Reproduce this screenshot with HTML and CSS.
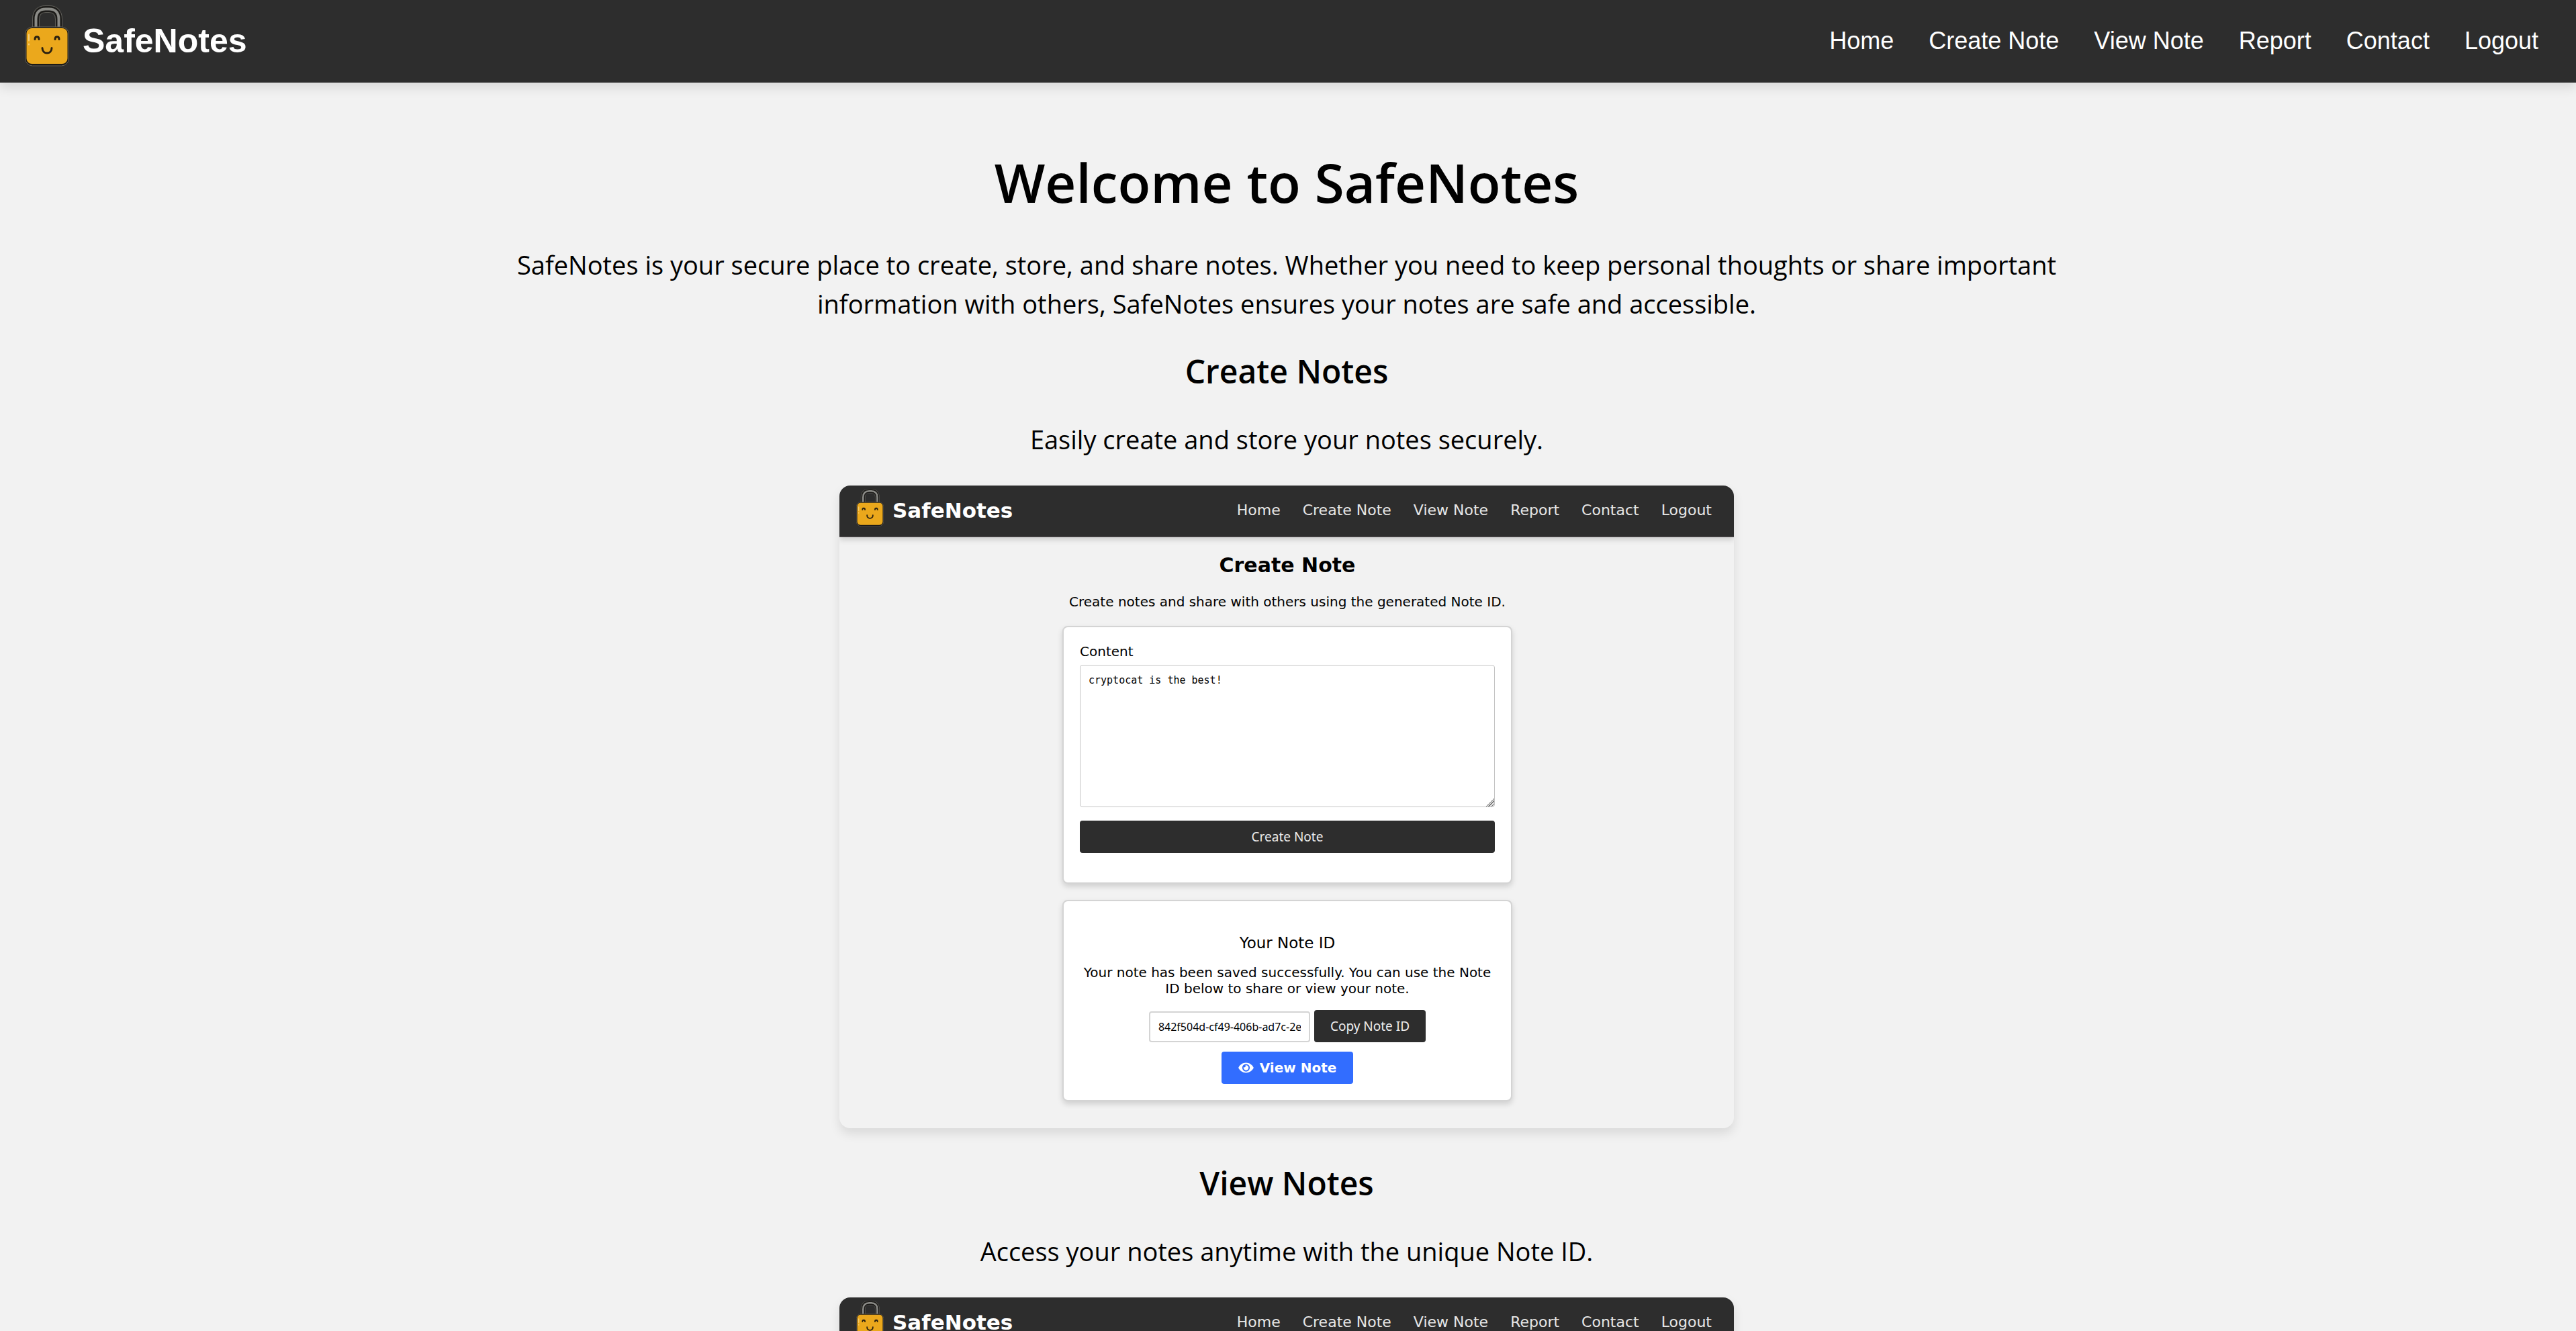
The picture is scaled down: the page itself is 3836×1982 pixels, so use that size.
FILE: index.html
```html
<!DOCTYPE html>
<html lang="en">
<head>
<meta charset="utf-8">
<title>SafeNotes</title>
<link rel="stylesheet" href="styles.css">
</head>
<body>
<svg class="defs" aria-hidden="true">
  <symbol id="lock" viewBox="0 0 66 90">
    <path d="M16.500 34V20C16.500 10 22 5 31 5H36C45 5 50.500 10 50.500 20V34" fill="none" stroke="#5d5c57" stroke-width="11"/>
    <path d="M16.500 34V20C16.500 10 22 5 31 5H36C45 5 50.500 10 50.500 20V34" fill="none" stroke="#1c1b19" stroke-width="9"/>
    <path d="M16.500 32V20C16.500 10 22 5 31 5H36C45 5 50.500 10 50.500 20V32" fill="none" stroke="#8b8b87" stroke-width="4"/>
    <rect x="0.500" y="31.500" width="65" height="58" rx="11" fill="#1c1a17" stroke="#65635c"/>
    <rect x="2.500" y="33.500" width="61" height="53" rx="8" fill="#eba81c"/>
    <path d="M6 43V52M6 57V58" stroke="#f5cf7c" stroke-width="2" stroke-linecap="round"/>
    <path d="M15 50C15 45 21 45 21 50M45 50C45 45 51 45 51 50" fill="none" stroke="#2b2110" stroke-width="3" stroke-linecap="round"/>
    <path d="M26 63C26 73 40 73 40 63" fill="none" stroke="#2b2110" stroke-width="3" stroke-linecap="round"/>
  </symbol>
</svg>
<header class="site-header">
  <a class="brand" href="#"><svg class="brand-lock" aria-hidden="true"><use href="#lock"/></svg><span class="brand-name">SafeNotes</span></a>
  <nav class="site-nav">
    <a href="#">Home</a><a href="#">Create Note</a><a href="#">View Note</a><a href="#">Report</a><a href="#">Contact</a><a href="#">Logout</a>
  </nav>
</header>
<main class="content">
  <h1 class="title">Welcome to SafeNotes</h1>
  <p class="lead">SafeNotes is your secure place to create, store, and share notes. Whether you need to keep personal thoughts or share important information with others, SafeNotes ensures your notes are safe and accessible.</p>
  <section class="feature">
    <h2 class="subtitle">Create Notes</h2>
    <p class="lead">Easily create and store your notes securely.</p>
    <div class="preview">
      <div class="preview-header">
        <a class="preview-brand" href="#"><svg class="preview-lock" aria-hidden="true"><use href="#lock"/></svg><span class="preview-name">SafeNotes</span></a>
        <nav class="preview-nav">
          <a href="#">Home</a><a href="#">Create Note</a><a href="#">View Note</a><a href="#">Report</a><a href="#">Contact</a><a href="#">Logout</a>
        </nav>
      </div>
      <div class="preview-body">
        <h3 class="preview-title">Create Note</h3>
        <p class="preview-text">Create notes and share with others using the generated Note ID.</p>
        <form class="card">
          <label for="note">Content</label>
          <textarea id="note" class="note">cryptocat is the best!</textarea>
          <button type="button" class="button">Create Note</button>
        </form>
        <div class="card result">
          <h4 class="result-title">Your Note ID</h4>
          <p class="result-text">Your note has been saved successfully. You can use the Note ID below to share or view your note.</p>
          <div class="id-row">
            <input class="id-field" type="text" aria-label="Note ID" value="842f504d-cf49-406b-ad7c-2e" readonly>
            <button type="button" class="button">Copy Note ID</button>
          </div>
          <a class="view-button" href="#"><svg class="eye" viewBox="0 0 576 512" aria-hidden="true"><path fill="#fff" d="M572.52 241.4C518.29 135.59 410.93 64 288 64S57.68 135.64 3.48 241.41a32.35 32.35 0 0 0 0 29.19C57.71 376.41 165.07 448 288 448s230.32-71.64 284.52-177.41a32.35 32.35 0 0 0 0-29.19zM288 400a144 144 0 1 1 144-144 143.93 143.93 0 0 1-144 144zm0-240a95.31 95.31 0 0 0-25.31 3.79 47.85 47.85 0 0 1-66.9 66.9A95.78 95.78 0 1 0 288 160z"/></svg>View Note</a>
        </div>
      </div>
    </div>
  </section>
  <section class="feature">
    <h2 class="subtitle">View Notes</h2>
    <p class="lead">Access your notes anytime with the unique Note ID.</p>
    <div class="preview">
      <div class="preview-header">
        <a class="preview-brand" href="#"><svg class="preview-lock" aria-hidden="true"><use href="#lock"/></svg><span class="preview-name">SafeNotes</span></a>
        <nav class="preview-nav">
          <a href="#">Home</a><a href="#">Create Note</a><a href="#">View Note</a><a href="#">Report</a><a href="#">Contact</a><a href="#">Logout</a>
        </nav>
      </div>
    </div>
  </section>
</main>
</body>
</html>
```
FILE: styles.css
```css
* { box-sizing: border-box; }
body {
  margin: 0;
  height: 100vh;
  overflow: hidden;
  background: #f2f2f2;
  color: #000;
  font-family: "Open Sans", sans-serif;
}
h1, h2, h3, h4, p { margin: 0; }
a { color: inherit; text-decoration: none; }
.defs { position: absolute; width: 0; height: 0; }

.site-header {
  display: flex;
  justify-content: space-between;
  align-items: center;
  padding: 8px 56px 24px 37px;
  background: #2d2d2d;
  color: #fff;
  font-family: "Liberation Sans", sans-serif;
  box-shadow: 0 8px 16px rgba(0, 0, 0, 0.1);
}
.brand {
  display: flex;
  align-items: center;
  gap: 20px;
  font-size: 50px;
  line-height: 60px;
  font-weight: 700;
}
.brand-name { padding-top: 14px; }
.brand-lock { width: 66px; height: 91px; }
.site-nav {
  display: flex;
  gap: 52px;
  padding-top: 14px;
  font-size: 36px;
  line-height: 44px;
}

.content {
  max-width: 2404px;
  margin: 0 auto;
  padding: 94px 24px 0 20px;
  text-align: center;
}
.title { font-size: 80px; line-height: 108px; font-weight: 600; margin-bottom: 40px; }
.lead { font-size: 38px; line-height: 58px; }
.feature { margin-bottom: 50px; }
.subtitle { font-size: 48px; line-height: 64px; font-weight: 600; margin: 40px 0; }
.feature + .feature .subtitle { margin-top: 0; }

.preview {
  max-width: 1332px;
  margin: 40px auto 0;
  border-radius: 16px;
  overflow: hidden;
  text-align: center;
  font-family: "DejaVu Sans", sans-serif;
  font-size: 20px;
  box-shadow: 0 8px 16px rgba(0, 0, 0, 0.1);
}
.preview-header {
  display: flex;
  justify-content: space-between;
  align-items: center;
  padding: 5px 33px 15px 25px;
  background: #2d2d2d;
  border-bottom: 1px solid #5a5556;
  color: #fff;
  box-shadow: 0 4px 8px rgba(0, 0, 0, 0.15);
}
.preview-brand {
  display: flex;
  align-items: center;
  gap: 13px;
  font-size: 31px;
  line-height: 40px;
  font-weight: 700;
}
.preview-name, .preview-nav { padding-top: 8px; }
.preview-lock { width: 41px; height: 56px; }
.preview-nav { display: flex; gap: 33px; font-size: 22px; line-height: 28px; color: #e6e6e6; }
.preview-body {
  display: flex;
  flex-direction: column;
  align-items: center;
  padding: 22px 0 40px 2px;
}
.preview-title { font-size: 30px; line-height: 40px; margin-bottom: 22px; }
.preview-text { line-height: 24px; margin-bottom: 24px; }
.card {
  display: flex;
  flex-direction: column;
  width: 100%;
  max-width: 670px;
  padding: 24px;
  background: #fff;
  border: 2px solid #d4d4d4;
  border-radius: 8px;
  box-shadow: 0 4px 8px rgba(0, 0, 0, 0.15);
  text-align: left;
}
.card label { line-height: 24px; margin-bottom: 8px; }
.note {
  height: 212px;
  padding: 12px;
  border: 1px solid #c4c4c4;
  border-radius: 4px;
  background:
    linear-gradient(135deg, #fff 50%, transparent 50%) right bottom / 13px 13px no-repeat,
    repeating-linear-gradient(135deg, #777 0 1px, #ddd 1px 3px) right bottom / 13px 13px no-repeat,
    #fff;
  font: 15px/20px "DejaVu Sans Mono", monospace;
  color: #000;
  resize: none;
}
.button {
  border: 0;
  border-radius: 4px;
  padding: 10px 24px;
  background: #2d2d2d;
  color: #eee;
  font: 19px/28px "Noto Sans", sans-serif;
}
form .button { margin: 20px 0; }
.result { align-items: center; margin-top: 24px; text-align: center; }
.result-title { font-size: 23px; line-height: 28px; font-weight: 400; margin: 24px 0 18px; }
.result-text { line-height: 24px; margin-bottom: 20px; }
.id-row { display: flex; align-items: flex-end; gap: 6px; margin-bottom: 14px; }
.id-field {
  width: 240px;
  height: 46px;
  padding: 0 12px;
  border: 2px solid #d4d4d4;
  border-radius: 4px;
  font: 16px/24px "Noto Sans", sans-serif;
  color: #000;
}
.view-button {
  display: flex;
  align-items: center;
  gap: 9px;
  padding: 10px 25px;
  border-radius: 4px;
  background: #326dff;
  color: #fff;
  font-weight: 700;
  line-height: 28px;
}
.eye { width: 23px; height: 20px; }
```
